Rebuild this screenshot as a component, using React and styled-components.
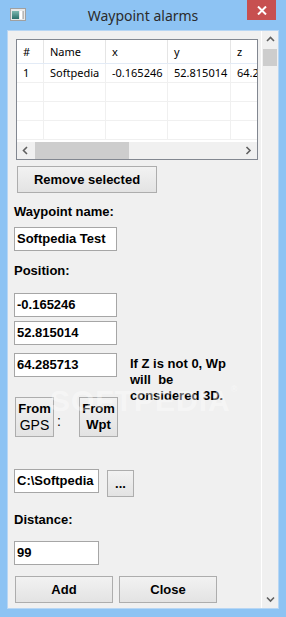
import React from "react";
import styled, { createGlobalStyle } from "styled-components";

const GlobalStyle = createGlobalStyle`
  html, body {
    margin: 0;
    padding: 0;
    background: #8dc3f3;
  }
  body {
    font-family: "Liberation Sans", Arial, sans-serif;
  }
  * {
    box-sizing: border-box;
  }
`;

const columns = ["#", "Name", "x", "y", "z"];
const rows = [["1", "Softpedia", "-0.165246", "52.815014", "64.285713"], [], [], []];

const Chevron = ({ dir = "up", color = "#606060" }) => {
  const pts = {
    up: "1,6 4.5,2.5 8,6",
    down: "1,2.5 4.5,6 8,2.5",
    left: "6,1 2.5,4.5 6,8",
    right: "2.5,1 6,4.5 2.5,8",
  }[dir];
  return (
    <svg width="9" height="9" viewBox="0 0 9 9">
      <polyline points={pts} fill="none" stroke={color} strokeWidth="1.6" />
    </svg>
  );
};

const AppIcon = () => (
  <svg width="16" height="13" viewBox="0 0 16 13">
    <defs>
      <linearGradient id="ic" x1="0" y1="0" x2="0" y2="1">
        <stop offset="0" stopColor="#7fb8b0" />
        <stop offset="1" stopColor="#2a6f6a" />
      </linearGradient>
    </defs>
    <rect x="0.5" y="0.5" width="15" height="12" fill="#e8e8e8" stroke="#a0a0a0" />
    <rect x="2" y="3" width="7" height="8" fill="url(#ic)" />
    <rect x="10" y="3" width="2" height="8" fill="#ffffff" />
    <rect x="12.5" y="3" width="1.5" height="8" fill="#b8b8b8" />
  </svg>
);

const App = () => {
  return (
    <>
      <GlobalStyle />
      <Window>
        <TitleBar>
          <IconCell>
            <AppIcon />
          </IconCell>
          <Title>Waypoint alarms</Title>
          <CloseCell>
            <CloseButton>
              <svg width="10" height="9" viewBox="0 0 10 9">
                <path d="M1 0.5 L9 8.5 M9 0.5 L1 8.5" stroke="#fff" strokeWidth="2" />
              </svg>
            </CloseButton>
          </CloseCell>
        </TitleBar>

        <Client>
          <Content>
            <ListView>
              <HeaderRow>
                {columns.map((c) => (
                  <HeaderCell key={c}>{c}</HeaderCell>
                ))}
              </HeaderRow>
              <Rows>
                {rows.map((r, i) => (
                  <Row key={i}>
                    {columns.map((c, j) => (
                      <Cell key={c}>{r[j] || ""}</Cell>
                    ))}
                  </Row>
                ))}
              </Rows>
              <HScroll>
                <ArrowBox>
                  <Chevron dir="left" />
                </ArrowBox>
                <HThumb />
                <Spacer />
                <ArrowBox>
                  <Chevron dir="right" />
                </ArrowBox>
              </HScroll>
            </ListView>

            <Button $w={140} $h={27} $mt={6} $ml={3}>
              Remove selected
            </Button>

            <Label $mt={11}>Waypoint name:</Label>
            <Field $w={103} $mt={7}>Softpedia Test</Field>

            <Label $mt={12}>Position:</Label>
            <Field $w={103} $mt={14}>-0.165246</Field>
            <Field $w={103} $mt={4}>52.815014</Field>
            <InlineRow $mt={8}>
              <Field $w={103}>64.285713</Field>
              <Note>{"If Z is not 0, Wp\nwill  be\nconsidered 3D."}</Note>
            </InlineRow>

            <InlineRow $mt={20} $ml={1}>
              <Button $w={39} $h={40} $stack>
                <Stack>
                  <span>From</span>
                  <Light>GPS</Light>
                </Stack>
              </Button>
              <Colon>:</Colon>
              <Button $w={39} $h={40} $stack>
                <Stack>
                  <span>From</span>
                  <span>Wpt</span>
                </Stack>
              </Button>
            </InlineRow>

            <InlineRow $mt={32}>
              <Field $w={85}>C:\Softpedia</Field>
              <Button $w={27} $h={27} $mt={1} $ml={8}>
                ...
              </Button>
            </InlineRow>

            <Label $mt={15}>Distance:</Label>
            <Field $w={85} $mt={13}>99</Field>

            <InlineRow $mt={11} $ml={1} $gap={6}>
              <Button $w={98} $h={27}>Add</Button>
              <Button $w={98} $h={27}>Close</Button>
            </InlineRow>
          </Content>

          <VScroll>
            <ArrowBox>
              <Chevron dir="up" />
            </ArrowBox>
            <VThumb />
            <Spacer />
            <ArrowBox>
              <Chevron dir="down" />
            </ArrowBox>
          </VScroll>
        </Client>

        <Watermark>
          SOFTPEDIA<sup>®</sup>
        </Watermark>
      </Window>
    </>
  );
};

export default App;

const Window = styled.div`
  position: relative;
  width: 286px;
  height: 617px;
  background: #8dc3f3;
  display: flex;
  flex-direction: column;
  overflow: hidden;
`;

const TitleBar = styled.div`
  height: 30px;
  flex: none;
  display: grid;
  grid-template-columns: 1fr auto 1fr;
  align-items: start;
`;

const IconCell = styled.div`
  padding: 8px 0 0 10px;
  display: flex;
`;

const Title = styled.div`
  font-family: "Noto Sans", "Open Sans", sans-serif;
  font-size: 14px;
  color: #2b2b2b;
  line-height: 20px;
  padding-top: 6px;
`;

const CloseCell = styled.div`
  display: flex;
  justify-content: flex-end;
  padding-right: 10px;
`;

const CloseButton = styled.div`
  width: 29px;
  height: 20px;
  background: #c75050;
  display: flex;
  align-items: center;
  justify-content: center;
`;

const Client = styled.div`
  flex: 1;
  margin: 0 7px 8px 7px;
  border: 1px solid #b7d6f4;
  background: #f0f0f0;
  display: flex;
  min-height: 0;
`;

const Content = styled.div`
  flex: 1;
  padding: 8px 0 0 6px;
  display: flex;
  flex-direction: column;
  align-items: flex-start;
  overflow: hidden;

  & > * {
    flex-shrink: 0;
  }
`;

const ListView = styled.div`
  margin-left: 2px;
  width: 242px;
  border: 1px solid #828790;
  background: #fff;
  overflow: hidden;
  font-family: "Noto Sans", "Open Sans", sans-serif;
  font-size: 11px;
  color: #000;
`;

const gridCols = "27px 62px 62px 63px 90px";

const HeaderRow = styled.div`
  display: grid;
  grid-template-columns: ${gridCols};
  height: 24px;
  border-bottom: 1px solid #e3ebf6;
`;

const HeaderCell = styled.div`
  padding-left: 6px;
  line-height: 23px;
  border-right: 1px solid #e5e5e5;
  white-space: nowrap;
`;

const Rows = styled.div`
  height: 78px;
`;

const Row = styled.div`
  display: grid;
  grid-template-columns: ${gridCols};
  height: 19px;
  border-bottom: 1px solid #f0f0f0;
`;

const Cell = styled.div`
  padding-left: 6px;
  line-height: 18px;
  border-right: 1px solid #f0f0f0;
  white-space: nowrap;
  overflow: hidden;
`;

const HScroll = styled.div`
  height: 17px;
  display: flex;
  background: #f0f0f0;
`;

const ArrowBox = styled.div`
  width: 17px;
  height: 17px;
  flex: none;
  display: flex;
  align-items: center;
  justify-content: center;
`;

const HThumb = styled.div`
  width: 94px;
  margin: 0 0 0 1px;
  height: 17px;
  background: #cdcdcd;
`;

const Spacer = styled.div`
  flex: 1;
`;

const VScroll = styled.div`
  width: 17px;
  flex: none;
  border-left: 1px solid #ffffff;
  display: flex;
  flex-direction: column;
  align-items: center;
`;

const VThumb = styled.div`
  width: 14px;
  height: 17px;
  margin-top: 1px;
  background: #cdcdcd;
`;

const Button = styled.div`
  width: ${(p) => p.$w}px;
  height: ${(p) => p.$h}px;
  margin-top: ${(p) => p.$mt || 0}px;
  margin-left: ${(p) => p.$ml || 0}px;
  flex: none;
  border: 1px solid #adadad;
  background: linear-gradient(#f2f2f2, #e3e3e3);
  display: flex;
  align-items: center;
  justify-content: center;
  text-align: center;
  font-weight: bold;
  font-size: 13px;
  line-height: ${(p) => (p.$stack ? "16px" : "1")};
  color: #000;
  white-space: nowrap;
`;

const Stack = styled.span`
  display: flex;
  flex-direction: column;
  align-items: center;
`;

const Light = styled.span`
  font-weight: normal;
  font-size: 14px;
`;

const Label = styled.div`
  margin-top: ${(p) => p.$mt || 0}px;
  height: 16px;
  line-height: 16px;
  font-size: 13px;
  font-weight: bold;
  color: #000;
`;

const Field = styled.div`
  width: ${(p) => p.$w}px;
  height: 24px;
  margin-top: ${(p) => p.$mt || 0}px;
  flex: none;
  background: #fff;
  border: 1px solid #a6a6a6;
  padding-left: 2px;
  line-height: 22px;
  font-size: 13px;
  font-weight: bold;
  color: #000;
  white-space: nowrap;
  overflow: hidden;
`;

const InlineRow = styled.div`
  display: flex;
  align-items: flex-start;
  margin-top: ${(p) => p.$mt || 0}px;
  margin-left: ${(p) => p.$ml || 0}px;
  gap: ${(p) => p.$gap || 0}px;
`;

/* the hint spills down beside the From buttons, as in the dialog */
const Note = styled.div`
  margin-left: 13px;
  height: 24px;
  padding-top: 3px;
  white-space: pre;
  font-size: 13px;
  font-weight: bold;
  line-height: 16px;
  color: #000;
`;

const Colon = styled.div`
  width: 25px;
  padding: 16px 0 0 3px;
  font-size: 14px;
  line-height: 16px;
  color: #000;
`;

const Watermark = styled.div`
  position: absolute;
  left: 50px;
  top: 384px;
  font-family: "Liberation Sans", Arial, sans-serif;
  font-weight: bold;
  font-size: 30px;
  letter-spacing: 1px;
  color: rgba(255, 255, 255, 0.4);
  pointer-events: none;

  sup {
    font-size: 9px;
    vertical-align: top;
  }
`;
